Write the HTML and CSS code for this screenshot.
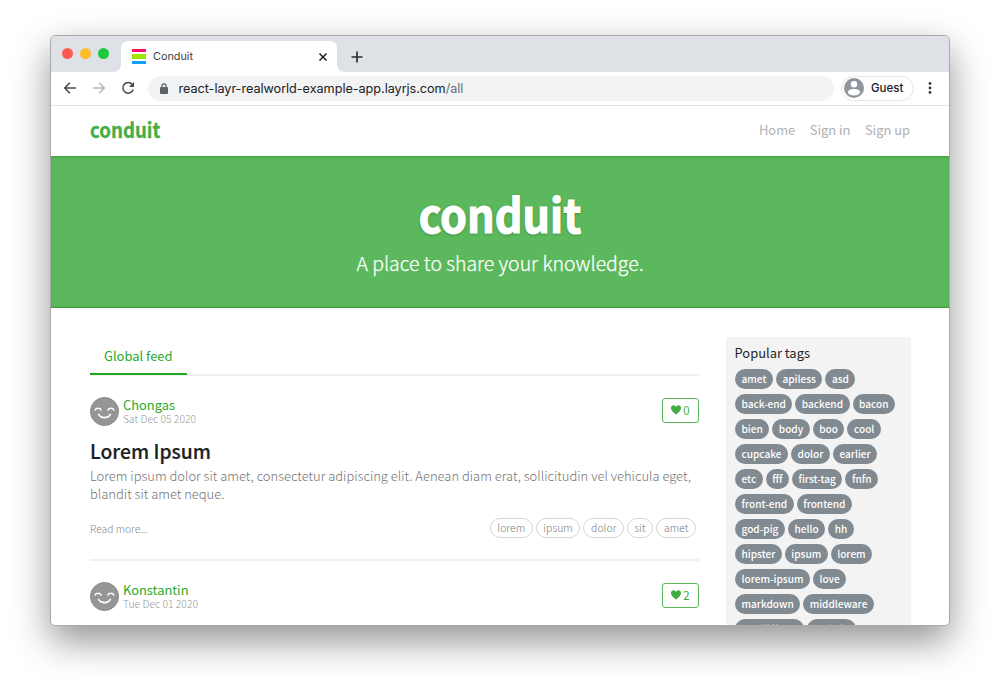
FILE: index.html
```html
<!DOCTYPE html>
<html lang="en">
<head>
<meta charset="utf-8">
<title>Conduit</title>
<link rel="stylesheet" href="styles.css">
</head>
<body>
<svg class="defs" width="0" height="0" aria-hidden="true">
  <symbol id="face" viewBox="0 0 29 29">
    <circle cx="14.5" cy="14.5" r="14" fill="#969696" stroke="#8a8a8a"/>
    <path d="M5.2 13q.6-1.8 2.9-1.8t2.900 1.800M18 13q.6-1.800 2.900-1.800t2.900 1.800M8.600 17.400q1.800 3.200 5.900 3.200t5.900-3.200" fill="none" stroke="#fff" stroke-width="1.600" stroke-linecap="round"/>
  </symbol>
  <symbol id="heart" viewBox="0 0 10 10">
    <path d="M5 9.600C3 8 0 5.700 0 3 0 1.300 1.100.3 2.500.3 3.600.3 4.500.9 5 1.800 5.500.9 6.400.3 7.500.3 8.900.3 10 1.300 10 3c0 2.700-3 5-5 6.600z" fill="#43ad43"/>
  </symbol>
</svg>
<div class="window">
  <div class="tabstrip">
    <div class="lights"><i class="red"></i><i class="amber"></i><i class="green"></i></div>
    <div class="tab">
      <span class="favicon"><i></i><i></i><i></i></span>
      <span class="tab-title">Conduit</span>
      <svg class="close" width="10" height="10" viewBox="0 0 10 10"><path d="M1.500 1.500l7 7M8.500 1.500l-7 7" stroke="#202124" stroke-width="1.500"/></svg>
    </div>
    <svg class="plus" width="12" height="12" viewBox="0 0 12 12"><path d="M6 .5v11M.5 6h11" stroke="#2b2d31" stroke-width="1.700"/></svg>
  </div>
  <div class="toolbar">
    <svg class="nav-icon" width="14" height="14" viewBox="0 0 14 14"><path d="M13 7H2M7 1.700L1.700 7 7 12.300" fill="none" stroke="#46494d" stroke-width="1.500"/></svg>
    <svg class="nav-icon" width="14" height="14" viewBox="0 0 14 14"><path d="M1 7h11M7 1.700L12.300 7 7 12.300" fill="none" stroke="#b4b6b9" stroke-width="1.500"/></svg>
    <svg class="nav-icon" width="14" height="14" viewBox="0 0 14 14"><path d="M11.200 3.400A5.300 5.300 0 1 0 12.200 8.500" fill="none" stroke="#46494d" stroke-width="1.500"/><path d="M13 1v5H8z" fill="#46494d"/></svg>
    <div class="address">
      <svg width="8" height="11" viewBox="0 0 8 11"><path d="M1.900 4.500V2.900a2.100 2.100 0 0 1 4.200 0v1.600" fill="none" stroke="#5f6368" stroke-width="1.200"/><rect y="4" width="8" height="7" rx="1" fill="#5f6368"/></svg>
      <span class="url">react-layr-realworld-example-app.layrjs.com<span>/all</span></span>
    </div>
    <div class="profile">
      <svg width="20" height="20" viewBox="0 0 20 20"><circle cx="10" cy="10" r="10" fill="#8f979e"/><circle cx="10" cy="6.300" r="3.200" fill="#fff"/><ellipse cx="10" cy="14.200" rx="6" ry="3.300" fill="#fff"/></svg>
      <span>Guest</span>
    </div>
    <svg class="dots" width="4" height="12" viewBox="0 0 4 12" fill="#36393d"><circle cx="2" cy="1.500" r="1.400"/><circle cx="2" cy="6" r="1.400"/><circle cx="2" cy="10.500" r="1.400"/></svg>
  </div>
  <header class="site-nav">
    <span class="brand">conduit</span>
    <nav><a>Home</a><a>Sign in</a><a>Sign up</a></nav>
  </header>
  <section class="hero">
    <h1>conduit</h1>
    <p>A place to share your knowledge.</p>
  </section>
  <main class="content">
    <div class="feed">
      <div class="feed-tabs"><span>Global feed</span></div>
      <article>
        <div class="meta">
          <svg class="avatar" width="29" height="29"><use href="#face"/></svg>
          <div class="who"><b>Chongas</b><time>Sat Dec 05 2020</time></div>
          <button class="like"><svg width="10" height="10"><use href="#heart"/></svg><span>0</span></button>
        </div>
        <h2>Lorem Ipsum</h2>
        <p class="desc">Lorem ipsum dolor sit amet, consectetur adipiscing elit. Aenean diam erat, sollicitudin vel vehicula eget,<br>blandit sit amet neque.</p>
        <div class="foot">
          <span>Read more...</span>
          <div class="outline-tags"><span>lorem</span><span>ipsum</span><span>dolor</span><span>sit</span><span>amet</span></div>
        </div>
      </article>
      <article>
        <div class="meta">
          <svg class="avatar" width="29" height="29"><use href="#face"/></svg>
          <div class="who"><b>Konstantin</b><time>Tue Dec 01 2020</time></div>
          <button class="like"><svg width="10" height="10"><use href="#heart"/></svg><span>2</span></button>
        </div>
      </article>
    </div>
    <aside class="sidebar">
      <h3>Popular tags</h3>
      <div class="tags">
        <div><span>amet</span><span>apiless</span><span>asd</span></div>
        <div><span>back-end</span><span>backend</span><span>bacon</span></div>
        <div><span>bien</span><span>body</span><span>boo</span><span>cool</span></div>
        <div><span>cupcake</span><span>dolor</span><span>earlier</span></div>
        <div><span>etc</span><span>fff</span><span>first-tag</span><span>fnfn</span></div>
        <div><span>front-end</span><span>frontend</span></div>
        <div><span>god-pig</span><span>hello</span><span>hh</span></div>
        <div><span>hipster</span><span>ipsum</span><span>lorem</span></div>
        <div><span>lorem-ipsum</span><span>love</span></div>
        <div><span>markdown</span><span>middleware</span></div>
        <div><span>mmllkjjmm</span><span>mohsin</span></div>
      </div>
    </aside>
  </main>
</div>
</body>
</html>
```
FILE: styles.css
```css
* { box-sizing: border-box; }
body {
  margin: 0;
  height: 692px;
  padding: 35px 50px 0;
  overflow: hidden;
  background: #fff;
  font-family: "Noto Sans CJK SC", "Noto Sans", sans-serif;
}
.defs { display: block; }
h1, h2, h3, p { margin: 0; }

.window {
  width: 900px;
  height: 591px;
  overflow: hidden;
  border: 1px solid #a9a9a9;
  border-radius: 5px;
  background: #fff;
  box-shadow: 0 15px 37px rgba(0, 0, 0, .43);
}

/* Browser chrome */
.tabstrip {
  display: flex;
  height: 36px;
  padding-left: 11px;
  background: #dee1e6;
}
.lights { display: flex; gap: 7px; padding-top: 12px; width: 59px; }
.lights i { width: 11px; height: 11px; border-radius: 50%; }
.red { background: #ff5a52; }
.amber { background: #fdbc2e; }
.green { background: #1fc93c; }
.tab {
  position: relative;
  display: flex;
  align-items: center;
  width: 216px;
  height: 31px;
  margin-top: 5px;
  padding: 0 9px 0 11px;
  border-radius: 7px 7px 0 0;
  background: #fff;
}
.tab::before, .tab::after {
  content: "";
  position: absolute;
  bottom: 0;
  width: 7px;
  height: 7px;
}
.tab::before { left: -7px; background: radial-gradient(circle at 0 0, transparent 6.500px, #fff 7px); }
.tab::after { right: -7px; background: radial-gradient(circle at 100% 0, transparent 6.500px, #fff 7px); }
.favicon { display: grid; grid-template-rows: 3px 5px 3px; gap: 2px; width: 14px; }
.favicon i:nth-child(1) { background: #ff0f68; }
.favicon i:nth-child(2) { background: #a2e502; }
.favicon i:nth-child(3) { background: #12a0f5; }
.tab-title { flex: 1; margin-left: 7px; font: 10.830px/14px Inter, sans-serif; color: #3c4043; }
.plus { margin: 15px 0 0 14px; }
.toolbar {
  display: flex;
  align-items: center;
  height: 34px;
  padding: 0 0 1px 12px;
  border-bottom: 1px solid #e2e3e5;
}
.nav-icon { margin-right: 15px; flex: none; }
.address {
  display: flex;
  align-items: center;
  width: 686px;
  height: 25px;
  margin-left: -2px;
  padding-left: 12px;
  border-radius: 13px;
  background: #f1f3f4;
}
.url { margin: 1px 0 0 10.500px; font: 12.700px/18px Inter, sans-serif; letter-spacing: -.05px; color: #202124; }
.url span { color: #6a6e73; }
.profile {
  display: flex;
  align-items: center;
  gap: 7px;
  width: 73px;
  height: 25px;
  margin-left: 7px;
  padding-left: 2px;
  border: 1px solid #e4e6e8;
  border-radius: 13px;
  font: 500 11.500px/16px Inter, sans-serif;
  color: #202124;
}
.dots { margin-left: 13.500px; }

/* Site header */
.site-nav {
  display: flex;
  justify-content: space-between;
  height: 50px;
  padding: 10px 39px 0;
}
.brand {
  font-size: 20.400px;
  line-height: 26px;
  font-weight: 700;
  color: #45ae45;
  -webkit-text-stroke: .3px #45ae45;
  transform: scaleX(.915);
  transform-origin: left;
}
.site-nav nav { display: flex; gap: 14.500px; padding-top: 4px; font-size: 12.900px; line-height: 20px; color: #b0b0b0; }
.hero {
  height: 152px;
  padding-top: 30px;
  text-align: center;
  color: #fff;
  background: #5cb85c;
  box-shadow: inset 0 1px 0 #49a349, inset 0 -1px 0 #3f973f, inset 0 5px 5px -5px #45a045, inset 0 -5px 5px -5px #45a045;
}
.hero h1 {
  font-size: 46.500px;
  line-height: 53px;
  font-weight: 700;
  -webkit-text-stroke: 1.200px #fff;
  text-shadow: 0 1px 3px rgba(0, 80, 0, .5);
  transform: scaleX(.928);
}
.hero p { margin-top: 9px; font-size: 19.440px; line-height: 30px; font-weight: 300; -webkit-text-stroke: .25px #fff; }

/* Feed */
.content { display: flex; justify-content: space-between; padding: 29px 38px 0 39px; }
.feed { width: 609px; }
.feed-tabs { display: flex; height: 39px; border-bottom: 2px solid #eeefef; }
.feed-tabs span {
  width: 97px;
  height: 38px;
  padding-left: 14px;
  border-bottom: 2px solid #20a820;
  font-size: 12.940px;
  line-height: 38px;
  color: #2ba92b;
}
article { padding-top: 21px; height: 185px; border-bottom: 2px solid #eeefef; }
.meta { display: flex; height: 34px; }
.avatar { margin: 0 4px 0 0; flex: none; }
.who { flex: 1; display: flex; flex-direction: column; }
.who b { font-size: 12.880px; line-height: 15px; font-weight: 400; color: #2ba92b; }
.who time { font-size: 10.360px; line-height: 14px; font-weight: 300; color: #999; }
.like {
  display: flex;
  align-items: center;
  justify-content: center;
  gap: 2px;
  width: 37px;
  height: 25px;
  margin-top: 1px;
  padding: 0 0 1px;
  border: 1px solid #5cb85c;
  border-radius: 3px;
  background: #fff;
  font: 11.400px/14px "Noto Sans CJK SC", sans-serif;
  color: #3fab3f;
}
.like span { margin-top: -1px; }
h2 { margin-top: 7px; font-size: 19.300px; line-height: 27px; font-weight: 500; -webkit-text-stroke: .2px #1c1f22; color: #1c1f22; }
.desc { margin-top: 2px; font-size: 12.940px; line-height: 18px; font-weight: 300; color: #747474; white-space: nowrap; }
.foot { display: flex; justify-content: space-between; margin-top: 15px; padding-right: 3px; font-size: 10.310px; line-height: 21px; font-weight: 300; color: #8c8c8c; }
.outline-tags { display: flex; gap: 3px; }
.outline-tags span {
  height: 20px;
  padding: 0 6.600px;
  border: 1px solid #d8d8d8;
  border-radius: 10px;
  font-size: 10.500px;
  line-height: 18px;
  color: #7c7c7c;
}

/* Sidebar */
.sidebar { width: 185px; height: 330px; padding: 6px 9px; border-radius: 3px; background: #f3f3f3; }
.sidebar h3 { margin-left: -.5px; font-size: 12.910px; line-height: 20px; font-weight: 400; color: #24272a; }
.tags { display: grid; gap: 5px; margin-top: 6px; }
.tags div { display: flex; gap: 3px; }
.tags span {
  height: 20px;
  padding: 0 6.500px;
  border-radius: 10px;
  background: #818a91;
  font-size: 10.100px;
  font-weight: 500;
  line-height: 19px;
  color: #fff;
}
```
